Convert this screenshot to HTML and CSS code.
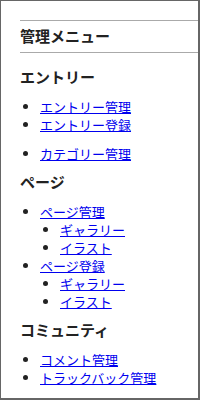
FILE: index.html
```html
<!DOCTYPE html>
<html lang="ja">
<head>
    <meta charset="UTF-8">
    <title>管理メニュー</title>
    <link rel="stylesheet" href="styles.css">
</head>
<body>

    <div class="frame">
        <div class="menu-title">管理メニュー</div>

        <h2>エントリー</h2>
        <ul>
            <li><a href="#">エントリー管理</a></li>
            <li><a href="#">エントリー登録</a></li>
        </ul>
        <ul>
            <li><a href="#">カテゴリー管理</a></li>
        </ul>

        <h2>ページ</h2>
        <ul>
            <li><a href="#">ページ管理</a>
                <ul>
                    <li><a href="#">ギャラリー</a></li>
                    <li><a href="#">イラスト</a></li>
                </ul>
            </li>
            <li><a href="#">ページ登録</a>
                <ul>
                    <li><a href="#">ギャラリー</a></li>
                    <li><a href="#">イラスト</a></li>
                </ul>
            </li>
        </ul>

        <h2>コミュニティ</h2>
        <ul>
            <li><a href="#">コメント管理</a></li>
            <li><a href="#">トラックバック管理</a></li>
        </ul>
    </div>

</body>
</html>
```
FILE: styles.css
```css
body {
    margin: 0;
    font-family: "Noto Sans CJK JP", "Liberation Sans", sans-serif;
    color: #222;
    background: #fff;
}
.frame {
    width: 200px;
    height: 400px;
    box-sizing: border-box;
    border: 1px solid #666;
    border-right-width: 2px;
    border-bottom-width: 2px;
    padding: 19px 0 0 19px;
    overflow: hidden;
}
.menu-title {
    font-size: 15px;
    font-weight: bold;
    line-height: 20px;
    padding: 5px 0 6px;
    border-top: 1px solid #aaa;
    border-bottom: 1px solid #aaa;
    margin-bottom: 14px;
}
h2 {
    font-size: 15px;
    font-weight: bold;
    line-height: 20px;
    margin: 0 0 11px;
}
ul {
    margin: 0 0 9px;
    padding-left: 20px;
    font-size: 13px;
    line-height: 18px;
    list-style: disc;
}
ul + ul {
    margin-top: 11px;
}
ul ul {
    margin: 0;
    list-style: disc;
}
a {
    color: #0000ee;
    text-decoration: underline;
}
```
